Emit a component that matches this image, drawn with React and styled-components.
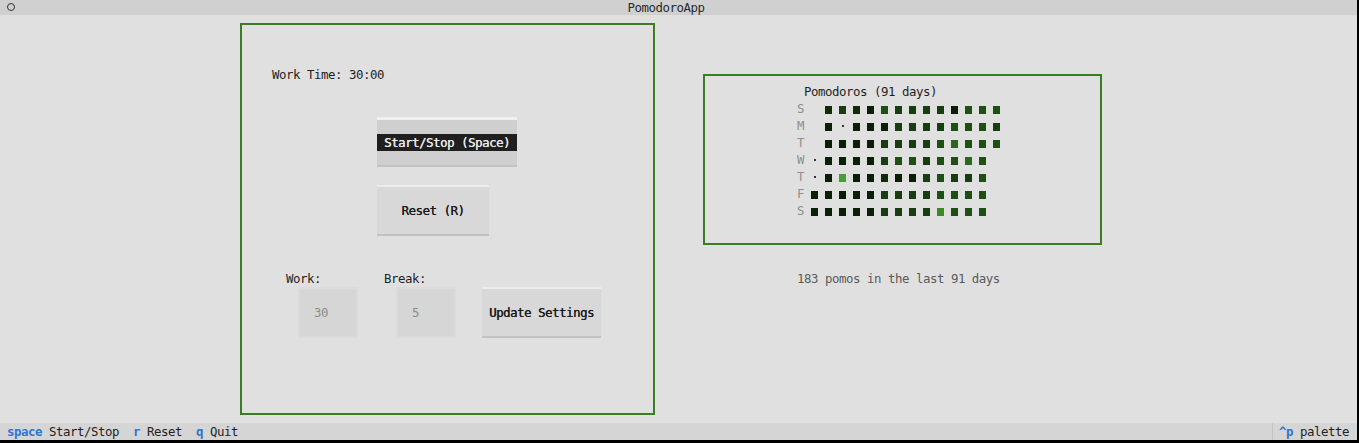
import React from 'react';
import styled, { createGlobalStyle } from 'styled-components';

const GlobalStyle = createGlobalStyle`
  html, body {
    margin: 0;
    padding: 0;
    background: #000;
  }
  body {
    font-family: "DejaVu Sans Mono", "Liberation Mono", monospace;
    font-size: 12.4px;
    letter-spacing: -0.465px;
    color: #1f1f1f;
  }
`;

const LEVELS = {
  0: '#0b1f06',
  1: '#0f2b0a',
  2: '#173d10',
  3: '#1e5014',
  4: '#2a681d',
  5: '#45a032',
  6: '#3a8a28',
};

const DAYS = [
  { label: 'S', cells: ' 1210322220333' },
  { label: 'M', cells: ' 0.00022223332' },
  { label: 'T', cells: ' 0000222234333' },
  { label: 'W', cells: '.000023323343 ' },
  { label: 'T', cells: '.050010023223 ' },
  { label: 'F', cells: '0000022223333 ' },
  { label: 'S', cells: '0000022226333 ' },
];

export default function App() {
  return (
    <>
      <GlobalStyle />
      <Screen>
        <Window>
          <Header>
            <HeaderIcon />
            <HeaderTitle>PomodoroApp</HeaderTitle>
          </Header>
          <Body>
            <TimerPanel>
              <TimeText>Work Time: 30:00</TimeText>
              <StartButton>
                <FocusedLabel>Start/Stop (Space)</FocusedLabel>
              </StartButton>
              <ResetButton>Reset (R)</ResetButton>
              <SettingsRow>
                <Field>
                  <FieldLabel>Work:</FieldLabel>
                  <InputBox>30</InputBox>
                </Field>
                <Field>
                  <FieldLabel>Break:</FieldLabel>
                  <InputBox>5</InputBox>
                </Field>
                <UpdateButton>Update Settings</UpdateButton>
              </SettingsRow>
            </TimerPanel>
            <StatsColumn>
              <HeatPanel>
                <HeatTitle>Pomodoros (91 days)</HeatTitle>
                <HeatGrid>
                  {DAYS.map((day, r) => (
                    <React.Fragment key={r}>
                      <DayLabel>{day.label}</DayLabel>
                      {day.cells.split('').map((c, i) => (
                        <HeatCell key={i}>
                          {c === '.' && <Dot />}
                          {c !== '.' && c !== ' ' && <Square $color={LEVELS[c]} />}
                        </HeatCell>
                      ))}
                    </React.Fragment>
                  ))}
                </HeatGrid>
              </HeatPanel>
              <Summary>183 pomos in the last 91 days</Summary>
            </StatsColumn>
          </Body>
          <Footer>
            <FooterKeys>
              <Binding><Key>space</Key> Start/Stop</Binding>
              <Binding><Key>r</Key> Reset</Binding>
              <Binding><Key>q</Key> Quit</Binding>
            </FooterKeys>
            <Palette><Key>^p</Key> palette</Palette>
          </Footer>
        </Window>
      </Screen>
    </>
  );
}

const Screen = styled.div`
  width: 1359px;
  height: 443px;
  background: #000;
  padding: 0 2px 3px 0;
  box-sizing: border-box;
`;

const Window = styled.div`
  width: 1357px;
  height: 440px;
  display: flex;
  flex-direction: column;
  background: #e0e0e0;
  white-space: pre;
`;

const Header = styled.div`
  height: 15px;
  flex-shrink: 0;
  background: #d0d0d0;
  display: flex;
  align-items: center;
`;

const HeaderIcon = styled.div`
  width: 6px;
  height: 6px;
  border: 1.4px solid #333;
  border-radius: 50%;
  margin-left: 7px;
  margin-top: -1px;
`;

const HeaderTitle = styled.div`
  flex: 1;
  text-align: center;
  padding-right: 40px;
  color: #2a2a2a;
  margin-top: -1px;
`;

const Body = styled.div`
  flex: 1;
  display: flex;
  align-items: flex-start;
  padding-left: 240px;
`;

const TextRow = styled.div`
  height: 17px;
  line-height: 17px;
`;

const TimerPanel = styled.div`
  margin-top: 8px;
  width: 415px;
  height: 392px;
  box-sizing: border-box;
  border: 2px solid #3b7d23;
  display: flex;
  flex-direction: column;
  align-items: flex-start;
  padding: 41px 0 0 30px;
`;

const TimeText = styled(TextRow)``;

const ButtonBase = styled.div`
  box-sizing: border-box;
  height: 51px;
  background: #d8d8d8;
  border-top: 2px solid #ededed;
  border-bottom: 2px solid #c2c2c2;
  display: flex;
  align-items: center;
  justify-content: center;
  color: #1a1a1a;
  text-shadow: 0.35px 0 0 currentColor;
`;

const StartButton = styled(ButtonBase)`
  width: 140px;
  height: 50px;
  margin: 34px 0 0 105px;
  background: #cfcfcf;
  border-top-width: 3px;
  border-top-color: #f0f0f0;
`;

const FocusedLabel = styled.div`
  width: 100%;
  height: 17px;
  line-height: 17px;
  background: #1f1f1f;
  color: #e8e8e8;
  text-align: center;
`;

const ResetButton = styled(ButtonBase)`
  width: 112px;
  margin: 18px 0 0 105px;
`;

const SettingsRow = styled.div`
  display: flex;
  align-items: flex-end;
  gap: 26px;
  margin: 34px 0 0 14px;
`;

const Field = styled.div`
  display: flex;
  flex-direction: column;
  width: 72px;
`;

const FieldLabel = styled(TextRow)``;

const InputBox = styled.div`
  box-sizing: border-box;
  width: 60px;
  height: 51px;
  margin-left: 12px;
  background: #d6d6d6;
  border: 2px solid #dbdbdb;
  color: #8c8c8c;
  display: flex;
  align-items: center;
  padding-left: 14px;
`;

const UpdateButton = styled(ButtonBase)`
  width: 119px;
`;

const StatsColumn = styled.div`
  margin: 59px 0 0 48px;
  display: flex;
  flex-direction: column;
`;

const HeatPanel = styled.div`
  width: 399px;
  height: 171px;
  box-sizing: border-box;
  border: 2px solid #3b7d23;
  padding: 7px 0 0 92px;
`;

const HeatTitle = styled(TextRow)`
  padding-left: 7px;
`;

const HeatGrid = styled.div`
  display: grid;
  grid-template-columns: repeat(15, 14px);
  grid-auto-rows: 17px;
`;

const DayLabel = styled(TextRow)`
  color: #8e8e8e;
`;

const HeatCell = styled.div`
  position: relative;
  width: 14px;
  height: 17px;
`;

const Square = styled.div`
  position: absolute;
  left: 0;
  top: 6px;
  width: 7px;
  height: 8px;
  background: ${p => p.$color};
`;

const Dot = styled.div`
  position: absolute;
  left: 2.5px;
  top: 8px;
  width: 2px;
  height: 2px;
  background: #333;
`;

const Summary = styled(TextRow)`
  margin: 25px 0 0 94px;
  color: #5a5a5a;
`;

const Footer = styled.div`
  height: 17px;
  flex-shrink: 0;
  background: #d5d5d5;
  display: flex;
  align-items: center;
  justify-content: space-between;
  line-height: 17px;
`;

const FooterKeys = styled.div`
  display: flex;
  gap: 14px;
  padding-left: 7px;
`;

const Binding = styled.span`
  color: #222;
`;

const Key = styled.span`
  color: #2f74d0;
  font-weight: bold;
`;

const Palette = styled.div`
  border-left: 1px solid #c4c4c4;
  padding: 0 8px 0 6px;
  color: #222;
`;
